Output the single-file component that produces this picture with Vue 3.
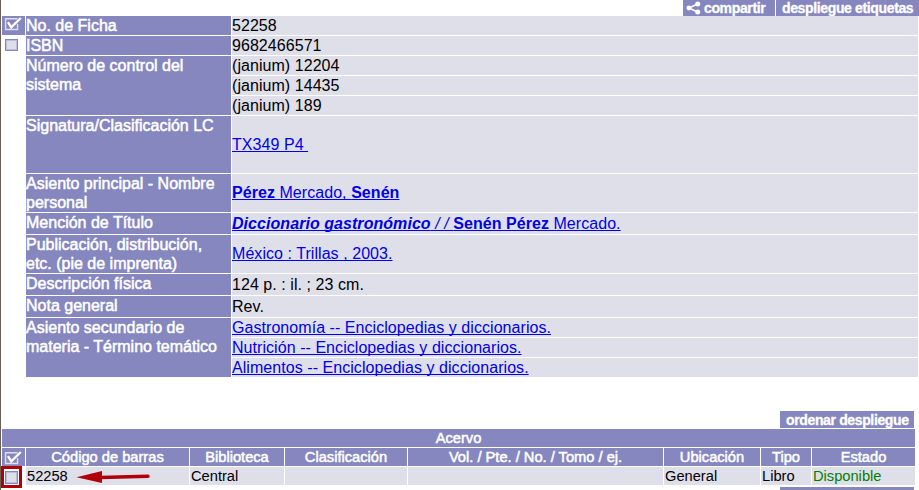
<script setup>
const records = [
  { label: ['No. de Ficha'], rows: [{ h: 19, parts: [{ t: '52258' }] }] },
  { label: ['ISBN'], rows: [{ h: 19, parts: [{ t: '9682466571' }] }] },
  {
    label: ['Número de control del', 'sistema'],
    rows: [
      { h: 19, parts: [{ t: '(janium) 12204' }] },
      { h: 19, parts: [{ t: '(janium) 14435' }] },
      { h: 19, parts: [{ t: '(janium) 189' }] },
    ],
  },
  { label: ['Signatura/Clasificación LC'], rows: [{ h: 57, link: true, parts: [{ t: 'TX349 P4\u00a0' }] }] },
  {
    label: ['Asiento principal - Nombre', 'personal'],
    rows: [{ h: 38, link: true, parts: [{ t: 'Pérez', c: 'bold' }, { t: ' Mercado, ' }, { t: 'Senén', c: 'bold' }] }],
  },
  {
    label: ['Mención de Título'],
    rows: [{
      h: 21,
      link: true,
      parts: [
        { t: 'Diccionario gastronómico', c: 'bold italic' },
        { t: ' / / ', c: 'italic' },
        { t: 'Senén Pérez', c: 'bold' },
        { t: ' Mercado.' },
      ],
    }],
  },
  {
    label: ['Publicación, distribución,', 'etc. (pie de imprenta)'],
    rows: [{ h: 38, link: true, parts: [{ t: 'México : Trillas , 2003.' }] }],
  },
  { label: ['Descripción física'], rows: [{ h: 21, parts: [{ t: '124 p. : il. ; 23 cm.' }] }] },
  { label: ['Nota general'], rows: [{ h: 21, parts: [{ t: 'Rev.' }] }] },
  {
    label: ['Asiento secundario de', 'materia - Término temático'],
    rows: [
      { h: 19, link: true, parts: [{ t: 'Gastronomía -- Enciclopedias y diccionarios.' }] },
      { h: 19, link: true, parts: [{ t: 'Nutrición -- Enciclopedias y diccionarios.' }] },
      { h: 19, link: true, parts: [{ t: 'Alimentos -- Enciclopedias y diccionarios.' }] },
    ],
  },
]
const columns = ['Código de barras', 'Biblioteca', 'Clasificación', 'Vol. / Pte. / No. / Tomo / ej.', 'Ubicación', 'Tipo', 'Estado']
const copy = ['52258', 'Central', '', '', 'General', 'Libro', 'Disponible']
</script>

<template>
  <main class="page">
    <div class="toolbar">
      <button class="tool share">
        <svg width="15" height="14" viewBox="0 0 15 14">
          <path d="M12 2.8 3 7l9 4.2" fill="none" stroke="#fff" stroke-width="1.5" />
          <circle cx="11.7" cy="2.9" r="2.5" fill="#fff" />
          <circle cx="2.8" cy="7" r="2.4" fill="#fff" />
          <circle cx="11.7" cy="11" r="2.5" fill="#fff" />
        </svg>
        <span>compartir</span>
      </button>
      <button class="tool tags">despliegue etiquetas</button>
    </div>

    <section class="record">
      <div class="selector">
        <div class="check-all">
          <svg width="23" height="19" viewBox="0 0 23 19">
            <path d="M15.5 2.7H3.6v10.8h12V8" fill="none" stroke="#dfdff0" stroke-width="1.4" />
            <path d="M6 6.2 9.2 11.4 18.8 2" fill="none" stroke="#fff" stroke-width="2.3" />
          </svg>
        </div>
        <span class="box"></span>
      </div>
      <dl class="fields">
        <template v-for="(r, i) in records" :key="i">
          <dt class="label">
            <div v-for="line in r.label" :key="line">{{ line }}</div>
          </dt>
          <dd class="values">
            <div v-for="(v, j) in r.rows" :key="j" class="value" :class="{ tall: v.h === 38 }" :style="{ height: v.h + 'px' }">
              <component :is="v.link ? 'a' : 'span'" :class="{ link: v.link }"><span v-for="(p, k) in v.parts" :key="k" :class="p.c">{{ p.t }}</span></component>
            </div>
          </dd>
        </template>
      </dl>
    </section>

    <section class="holdings">
      <button class="tool sort">ordenar despliegue</button>
      <h2 class="title">Acervo</h2>
      <div class="grid">
        <div class="head mark">
          <svg width="23" height="18" viewBox="0 0 23 18">
            <path d="M15.5 4.7H3.6v10.8h12V10" fill="none" stroke="#dfdff0" stroke-width="1.4" />
            <path d="M6 8.2 9.2 13.4 18.8 4" fill="none" stroke="#fff" stroke-width="2.3" />
          </svg>
        </div>
        <div v-for="c in columns" :key="c" class="head">{{ c }}</div>
        <div class="pick">
          <span class="box"></span>
          <span class="highlight"></span>
        </div>
        <div v-for="(c, i) in copy" :key="i" class="cell" :class="{ available: i === 6 }">
          {{ c }}
          <svg v-if="i === 0" class="arrow" width="76" height="14" viewBox="0 0 76 14">
            <path d="M24 7.5 72 6.2" stroke="#b00008" stroke-width="3.4" stroke-linecap="round" />
            <path d="M0.5 7.3 26 1V13Z" fill="#b00008" />
          </svg>
        </div>
      </div>
      <div class="footer-tool"></div>
    </section>
  </main>
</template>

<style>
body { margin: 0; background: #fff; overflow: hidden; }
</style>

<style scoped>
.page {
  box-sizing: border-box;
  width: 919px;
  height: 490px;
  overflow: hidden;
  border-left: 1px solid #6a6057;
  background: #fff;
  color: #000;
  font: 16px/19px "Liberation Sans", Arial, sans-serif;
}
.toolbar { display: flex; justify-content: flex-end; gap: 1px; height: 16px; }
.tool {
  box-sizing: border-box;
  display: flex;
  align-items: center;
  border: 0;
  padding: 0;
  background: #8687bf;
  color: #fff;
  font: bold 14px/16px "Liberation Sans", Arial, sans-serif;
  letter-spacing: -0.36px;
  white-space: nowrap;
  -webkit-text-stroke: 0.3px #fff;
}
.share { width: 92px; padding-left: 3px; gap: 3px; }
.tags { width: 143px; padding-left: 6px; }
.record { display: flex; padding-left: 1px; gap: 1px; }
.selector { width: 23px; }
.check-all { height: 19px; background: #8687bf; }
.check-all svg, .mark svg { display: block; }
.box {
  box-sizing: border-box;
  display: block;
  width: 13px;
  height: 12px;
  border: 1px solid #8687bf;
  background: #dedee8;
  box-shadow: inset 0 0 0 1px #bcbddb;
}
.selector .box { margin: 4px 0 0 3px; }
.fields { display: grid; grid-template-columns: 205px 686px; gap: 1px; margin: 0; }
.label { background: #8687bf; color: #fff; white-space: nowrap; -webkit-text-stroke: 0.5px #fff; }
.values { display: flex; flex-direction: column; gap: 1px; margin: 0; }
.value {
  box-sizing: border-box;
  display: flex;
  align-items: center;
  background: #dfdfe9;
  white-space: pre;
  letter-spacing: 0.055px;
}
.tall { padding-bottom: 2px; }
.link { color: #0000e6; text-decoration: underline; text-decoration-skip-ink: none; }
.bold { font-weight: bold; }
.italic { font-style: italic; }
.holdings { width: 914px; padding-top: 34px; }
.sort { width: 134px; height: 17px; margin-left: 779px; padding-left: 6px; }
.title {
  height: 18px;
  margin: 1px 0 1px 1px;
  background: #8687bf;
  color: #fff;
  font: 14.67px/18px "Liberation Sans", Arial, sans-serif;
  text-align: center;
  -webkit-text-stroke: 0.5px #fff;
}
.grid {
  display: grid;
  grid-template-columns: 23px 163px 94px 122px 255px 96px 50px 103px;
  grid-template-rows: 18px 18px;
  gap: 1px;
  margin-left: 1px;
  font-size: 14.67px;
  line-height: 18px;
}
.head { background: #8687bf; color: #fff; text-align: center; white-space: nowrap; -webkit-text-stroke: 0.5px #fff; }
.cell { position: relative; padding-left: 1px; background: #dfdfe9; white-space: nowrap; }
.available { color: #008000; }
.pick { position: relative; }
.pick .box { height: 13px; margin: 4px 0 0 3px; }
.highlight {
  position: absolute;
  box-sizing: border-box;
  top: -1px;
  left: -1px;
  width: 21px;
  height: 22px;
  border: 3px solid #b00008;
}
.arrow { position: absolute; left: 50px; top: 3px; }
.footer-tool { width: 134px; height: 4px; margin: 2px 0 0 779px; background: #8687bf; }
</style>
